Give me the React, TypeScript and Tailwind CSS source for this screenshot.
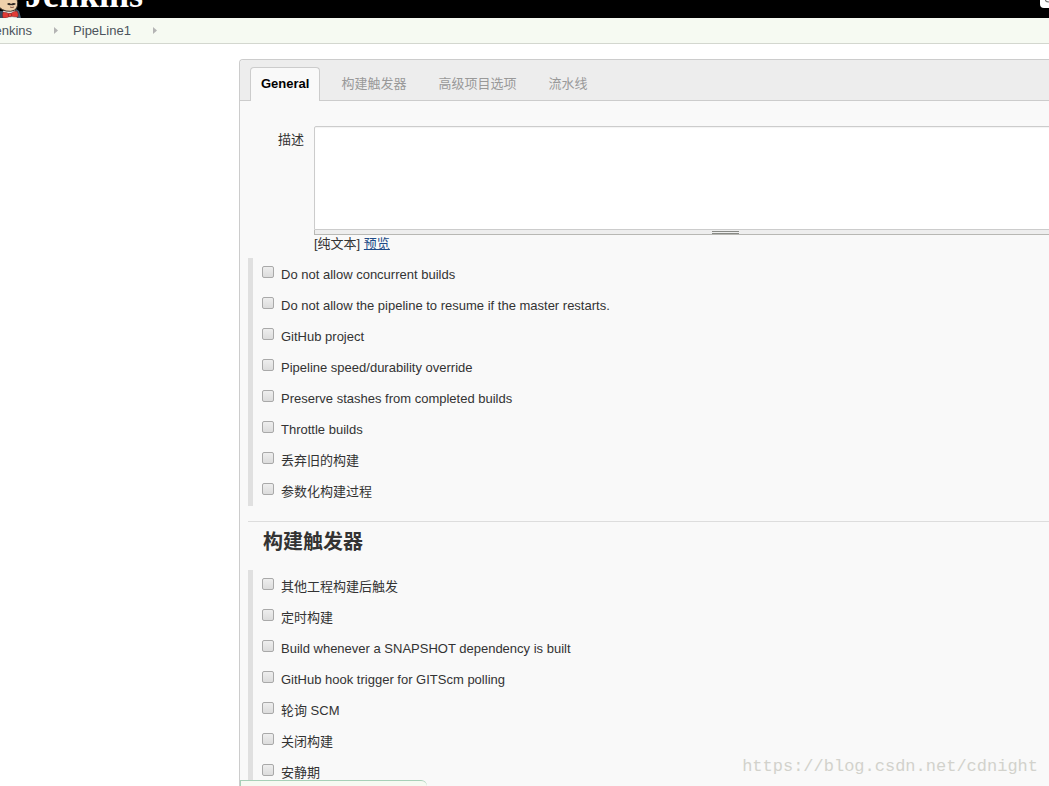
import React, { useState } from 'react';

const tabs = ['General', '构建触发器', '高级项目选项', '流水线'];

const generalOptions = [
  'Do not allow concurrent builds',
  'Do not allow the pipeline to resume if the master restarts.',
  'GitHub project',
  'Pipeline speed/durability override',
  'Preserve stashes from completed builds',
  'Throttle builds',
  '丢弃旧的构建',
  '参数化构建过程',
];

const triggerOptions = [
  '其他工程构建后触发',
  '定时构建',
  'Build whenever a SNAPSHOT dependency is built',
  'GitHub hook trigger for GITScm polling',
  '轮询 SCM',
  '关闭构建',
  '安静期',
];

const ButlerLogo: React.FC = () => (
  <svg width="22" height="18" viewBox="0 0 22 18" className="shrink-0" aria-hidden="true">
    <path d="M0 11 L4 11 L6 18 H0Z" fill="#34495e" />
    <path d="M16 9 L19 11 L21 18 H16Z" fill="#4a6076" />
    <path d="M3 11 L15 9 L17 18 H3Z" fill="#e8e8e6" />
    <path d="M-1 -1 H17 Q19 6 15 10 Q11 12 6 11 Q2 10 -1 7Z" fill="#efd0ab" stroke="#3b302a" strokeWidth="1" />
    <path d="M7 4 Q9 2 11 4 Q14 2 16 4 Q13 6 11 5 Q9 6 7 4Z" fill="#2f2622" />
    <path d="M10 7 Q12 8 14 7" fill="none" stroke="#8a5a48" strokeWidth="1" />
    <path d="M3 12 Q6 12 10 14 Q13 11 17 11 Q19 14 18 17 Q14 17 10 16 Q8 18 3 18 Q2 15 3 12Z" fill="#e03a35" stroke="#5a1a18" strokeWidth="0.4" />
    <circle cx="10" cy="15" r="1.8" fill="#f2403c" stroke="#5a1a18" strokeWidth="0.5" />
  </svg>
);

const Arrow: React.FC = () => (
  <svg width="4" height="7" viewBox="0 0 4 7" className="shrink-0" aria-hidden="true">
    <path d="M0 0 L4 3.5 L0 7Z" fill="#b4b4b4" />
  </svg>
);

const OptionList: React.FC<{ name: string; options: string[] }> = ({ name, options }) => (
  <ul className="border-l-5 border-[#e0e0e0] pl-[9px]">
    {options.map((option, i) => (
      <li key={option} className="flex h-[31px] items-start gap-[7px]">
        <input
          type="checkbox"
          id={`${name}-${i}`}
          className="mt-2 size-3 shrink-0 appearance-none rounded-xs border border-[#a9a9a9] bg-linear-to-b from-[#eeeeee] to-[#dcdcdc] checked:from-[#8fb4dd] checked:to-[#5b8fc9]"
        />
        <label htmlFor={`${name}-${i}`} className="leading-[34px]">
          {option}
        </label>
      </li>
    ))}
  </ul>
);

const App: React.FC = () => {
  const [activeTab, setActiveTab] = useState(0);
  const [description, setDescription] = useState('');

  return (
    <div className="relative flex h-screen flex-col overflow-hidden bg-white font-['Liberation_Sans','Noto_Sans_CJK_SC',sans-serif] text-[13px] text-[#333333]">
      {/* Header */}
      <header className="flex h-[18px] shrink-0 items-end justify-between overflow-hidden bg-black">
        <a href="#home" className="flex items-end gap-[3px]">
          <ButlerLogo />
          <span className="pb-[7px] font-['Liberation_Serif',serif] text-[36px] leading-8 font-bold text-white">Jenkins</span>
        </a>
        <div className="flex h-[18px] w-[9px] items-start">
          <input
            type="search"
            aria-label="Search"
            className="h-2 w-full rounded-bl-sm bg-white"
          />
          <svg width="4" height="3" viewBox="0 0 4 3" className="-ml-1 shrink-0" aria-hidden="true">
            <path d="M0 0 Q1 2 4 2" fill="none" stroke="#777777" strokeWidth="1.2" />
          </svg>
        </div>
      </header>

      {/* Breadcrumbs */}
      <nav className="flex h-[26px] shrink-0 items-center border-b border-[#d3d7cf] bg-[#f6faf2] text-[#4d545d]">
        <a href="#jenkins" className="-ml-3">Jenkins</a>
        <span className="pr-[15px] pl-[22px]"><Arrow /></span>
        <a href="#pipeline">PipeLine1</a>
        <span className="pl-[22px]"><Arrow /></span>
      </nav>

      {/* The form is wider than the window and runs off its right side */}
      <main className="-mr-[100px] flex min-h-0 flex-1 flex-col overflow-hidden pt-[15px] pl-[239px]">
        <form className="flex-1 rounded-tl-sm border-t border-l border-[#cccccc] bg-[#f9f9f9]">
          {/* Tabs */}
          <div role="tablist" className="flex h-[41px] items-end gap-[10px] rounded-tl-sm border-b border-[#cccccc] bg-[#ededed] pl-[10px]">
            {tabs.map((tab, i) => (
              <button
                key={tab}
                type="button"
                role="tab"
                aria-selected={i === activeTab}
                onClick={() => setActiveTab(i)}
                className={
                  i === activeTab
                    ? '-mb-px h-[34px] rounded-t border border-b-0 border-[#cccccc] bg-[#f9f9f9] px-[10px] pb-[2px] font-bold text-black'
                    : '-mb-px h-[34px] border border-b-0 border-transparent px-[10px] pb-[2px] text-[#999999]'
                }
              >
                {tab}
              </button>
            ))}
          </div>

          {/* Description */}
          <div className="flex gap-[10px] pt-[25px] pr-3">
            <label htmlFor="description" className="w-16 shrink-0 pt-1 text-right leading-5">
              描述
            </label>
            <div className="flex-1">
              <textarea
                id="description"
                value={description}
                onChange={(e) => setDescription(e.target.value)}
                className="block h-[104px] w-full resize-none rounded-t-xs border border-[#cccccc] bg-white px-1 inset-shadow-xs outline-none"
              />
              <div className="flex h-[5px] items-end justify-center border-x border-b border-[#b8b8b4] bg-[#eeeeee]">
                <div className="h-[3px] w-[27px] border-y border-[#888a85]" />
              </div>
              <p className="h-[23px] leading-[18px]">
                [纯文本]{' '}
                <a href="#preview" className="text-[#204a87] underline">
                  预览
                </a>
              </p>
            </div>
          </div>

          <div className="pl-2">
            <OptionList name="general" options={generalOptions} />

            {/* Build triggers */}
            <section className="mt-[15px] border-t border-[#dddddd]">
              <h2 className="h-12 pl-[15px] text-[20px] leading-10 font-bold">构建触发器</h2>
              <OptionList name="trigger" options={triggerOptions} />
            </section>
          </div>
        </form>
      </main>

      {/* Top edge of the sticky save bar */}
      <div className="absolute bottom-0 left-[240px] h-[6px] w-[187px] rounded-tr-lg border-t border-l border-[#a8d0b8] bg-[#f6faf2]" />

      <div className="absolute right-[11px] bottom-[7px] font-['Liberation_Mono',monospace] text-[17px] leading-6 text-[#d2d2cc]">
        https://blog.csdn.net/cdnight
      </div>
    </div>
  );
};

export default App;
